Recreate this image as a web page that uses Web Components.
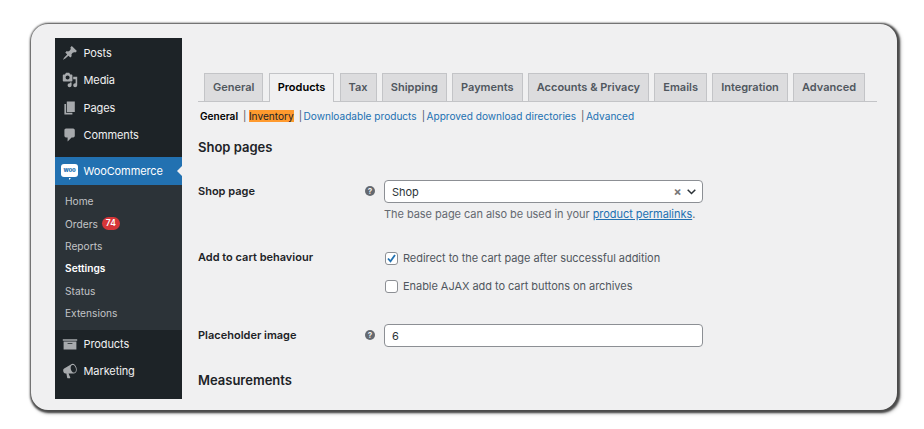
<!DOCTYPE html>
<html>
<head>
<meta charset="utf-8">
<style>
  html, body { margin: 0; background: #fff; }
  body { font-family: Inter, "Liberation Sans", sans-serif; font-size: 11px; color: #1d2327; }
</style>
</head>
<body>
<wp-screen>
  <admin-menu slot="menu">
    <menu-item icon="post">Posts</menu-item>
    <menu-item icon="media">Media</menu-item>
    <menu-item icon="page">Pages</menu-item>
    <menu-item icon="comments">Comments</menu-item>
    <menu-item icon="woo" current>WooCommerce</menu-item>
    <sub-menu>
      <sub-item>Home</sub-item>
      <sub-item>Orders <count-badge>74</count-badge></sub-item>
      <sub-item>Reports</sub-item>
      <sub-item current>Settings</sub-item>
      <sub-item>Status</sub-item>
      <sub-item>Extensions</sub-item>
    </sub-menu>
    <menu-item icon="archive">Products</menu-item>
    <menu-item icon="megaphone">Marketing</menu-item>
  </admin-menu>
  <settings-page>
    <tab-bar>
      <tab-item>General</tab-item>
      <tab-item active>Products</tab-item>
      <tab-item>Tax</tab-item>
      <tab-item>Shipping</tab-item>
      <tab-item>Payments</tab-item>
      <tab-item>Accounts &amp; Privacy</tab-item>
      <tab-item>Emails</tab-item>
      <tab-item>Integration</tab-item>
      <tab-item>Advanced</tab-item>
    </tab-bar>
    <section-links></section-links>
    <section-title>Shop pages</section-title>
    <form-row label="Shop page" help top="25">
      <shop-select></shop-select>
      <p-note>The base page can also be used in your <a-link>product permalinks</a-link>.</p-note>
    </form-row>
    <form-row label="Add to cart behaviour" tight top="30">
      <check-field checked>Redirect to the cart page after successful addition</check-field>
      <check-field>Enable AJAX add to cart buttons on archives</check-field>
    </form-row>
    <form-row label="Placeholder image" help top="17">
      <text-box>6</text-box>
    </form-row>
    <section-title style="margin-top:25px">Measurements</section-title>
  </settings-page>
</wp-screen>

<script>
const ICONS = {
    post: '<path d="M10.44 3.02l1.82-1.82 6.36 6.35-1.83 1.82c-1.05-.68-2.48-.57-3.41.36l-.75.75c-.92.93-1.04 2.35-.35 3.41l-1.83 1.82-2.41-2.41-2.8 2.79c-.42.42-3.38 2.71-3.8 2.29s1.86-3.39 2.28-3.81l2.79-2.79L4.1 9.36l1.83-1.82c1.05.69 2.48.57 3.4-.36l.75-.75c.93-.92 1.05-2.35.36-3.41z"/>',
    media: '<path d="M13 11V4c0-.55-.45-1-1-1h-1.67L9 1H5L3.67 3H2c-.55 0-1 .45-1 1v7c0 .55.45 1 1 1h10c.55 0 1-.45 1-1zM7 4.5c1.38 0 2.5 1.12 2.5 2.5S8.38 9.5 7 9.5 4.5 8.38 4.5 7 5.62 4.5 7 4.5zM14 6h5v10.5c0 1.38-1.12 2.5-2.5 2.5S14 17.88 14 16.5s1.12-2.5 2.5-2.5c.17 0 .34.02.5.05V9h-3V6zm-4 8.05V13h2v3.5c0 1.38-1.12 2.5-2.5 2.5S7 17.88 7 16.5 8.12 14 9.5 14c.17 0 .34.02.5.05z"/>',
    page: '<path d="M6 15V2h10v13H6zm-1 1h8v2H3V5h2v11z"/>',
    comments: '<path d="M5 2h9c1.1 0 2 .9 2 2v7c0 1.1-.9 2-2 2h-2l-5 5v-5H5c-1.1 0-2-.9-2-2V4c0-1.1.9-2 2-2z"/>',
    archive: '<path fill-rule="evenodd" d="M19 4v2H1V4h18zM2 7h16v10H2V7zm11 3V9H7v1h6z"/>',
    megaphone: '<path fill-rule="evenodd" d="M18.15 5.94c.46 1.62.38 3.22-.02 4.48-.42 1.28-1.26 2.18-2.3 2.48-.16.06-.26.06-.4.06-.06.02-.12.02-.18.02-.06.02-.14.02-.22.02H8.2l2.22 5.5c.02.14-.06.26-.14.34-.08.1-.24.16-.34.16H6.95c-.1 0-.26-.06-.34-.16-.08-.08-.16-.2-.14-.34l-1-5.5H4.25l-.02-.02c-.5.06-1.08-.18-1.54-.62s-.88-1.08-1.06-1.88c-.24-.8-.2-1.56-.02-2.2.18-.62.58-1.08 1.06-1.3l.02-.02 9-5.4c.1-.06.18-.1.24-.16.06-.04.14-.08.24-.12.16-.08.28-.12.5-.18 1.04-.3 2.24.1 3.22.98s1.76 2.2 2.26 3.86zm-2.58 5.98c.4-.1.74-.34 1.04-.7.58-.7.86-1.76.86-3.04-.02-.64-.12-1.34-.34-2.04-.2-.72-.52-1.34-.9-1.9-.76-1.11-1.8-1.72-2.78-1.72-.22 0-.46.04-.66.1-.56.16-.94.42-1.24.84-.32.4-.52.94-.62 1.54-.1.64-.1 1.3-.02 2.08.06.4.16.8.26 1.2.12.38.26.76.44 1.14.36.76.86 1.4 1.4 1.85.54.44 1.14.72 1.74.72.18 0 .42-.04.82-.07z"/>'
}

// small helper, every element here is just a style block and some markup
function define(name, css, html, init) {
    customElements.define(name, class extends HTMLElement {
        constructor() {
            super()
            this.attachShadow({ mode: 'open' })
        }
        connectedCallback() {
            this.shadowRoot.innerHTML = `<style>${css}</style>${typeof html === 'function' ? html(this) : html}`
            if (init) init(this)
        }
    })
}

define('wp-screen', `
    :host { display: block; width: 924px; height: 429px; padding: 24px 27px 0 31px; box-sizing: border-box; overflow: hidden; }
    .card { display: flex; align-items: flex-start; height: 386px; box-sizing: border-box; padding: 14px 20px 0 24px;
        background: #f0f0f1; border-radius: 17px; box-shadow: 1px 1px 2px 1.5px #4a4a4a, 2px 2px 4px 1px #aaa; overflow: hidden; }
`, `<div class="card"><slot name="menu"></slot><slot></slot></div>`)

define('admin-menu', `
    :host { display: flex; flex-direction: column; width: 127px; height: 361px; flex: none; padding-top: 1.3px; box-sizing: border-box; background: #1d2327; }
`, `<slot></slot>`)

define('menu-item', `
    :host { display: flex; align-items: center; height: 27.4px; flex: none; color: #f0f0f1; position: relative; letter-spacing: -.1px; }
    :host([current]) { height: 28px; margin-top: 7.7px; background: #2271b1; color: #fff; }
    .ico { width: 16px; height: 16px; margin: 0 6px 0 6.5px; fill: #a7aaad; flex: none; }
    .woo { width: 17px; height: 13px; margin: 0 5.5px 0 6px; flex: none; background: #fff; border-radius: 3px; position: relative;
        color: #2271b1; font-size: 6px; font-weight: 800; line-height: 12px; text-align: center; letter-spacing: -.2px; }
    .woo::after { content: ''; position: absolute; left: 8px; bottom: -2.5px; border: 1.5px solid transparent; border-top-color: #fff; border-left-color: #fff; }
    .arrow { position: absolute; right: 0; top: 9px; border: 5px solid transparent; border-right-color: #f0f0f1; border-left: 0; }
`, el => {
    const icon = el.getAttribute('icon')
    const mark = icon === 'woo'
        ? '<span class="woo">woo</span>'
        : `<svg class="ico" viewBox="0 0 20 20">${ICONS[icon]}</svg>`
    return `${mark}<slot></slot>${el.hasAttribute('current') ? '<span class="arrow"></span>' : ''}`
})

define('sub-menu', `
    :host { display: flex; flex-direction: column; height: 145.5px; flex: none; box-sizing: border-box; padding: 5.5px 0 0 10px; background: #2c3338; }
`, `<slot></slot>`)

define('sub-item', `
    :host { display: flex; align-items: center; gap: 4px; height: 22.4px; flex: none; font-size: 10.2px; color: #c3c4c7; }
    :host([current]) { color: #fff; font-weight: 600; }
`, `<slot></slot>`)

define('count-badge', `
    :host { display: inline-block; background: #d63638; color: #fff; border-radius: 9px; font-size: 8.5px; font-weight: 600; line-height: 13px; padding: 0 4px; }
`, `<slot></slot>`)

define('settings-page', `
    :host { display: block; flex: 1; min-width: 0; padding: 35px 0 0 16px; }
`, `<slot></slot>`)

define('tab-bar', `
    :host { display: flex; gap: 5.2px; padding-left: 6px; border-bottom: 1px solid #c3c4c7; height: 28px; align-items: flex-end; }
`, `<slot></slot>`)

define('tab-item', `
    :host { display: block; box-sizing: border-box; height: 28px; padding: 0 8px; line-height: 26px; font-weight: 600; color: #50575e;
        background: #dcdcde; border: 1px solid #c3c4c7; border-bottom: 0; white-space: nowrap; }
    :host([active]) { background: #f0f0f1; color: #000; height: 29px; margin-bottom: -1px; }
`, `<slot></slot>`)

define('section-links', `
    :host { display: flex; align-items: center; height: 14px; margin: 7px 0 0 2px; font-size: 10.1px; color: #2271b1; white-space: nowrap; }
    b { color: #000; font-weight: 600; }
    i { font-style: normal; color: #50575e; margin: 0 1.5px 0 5px; }
    b + i { margin-right: 2.5px; }
    mark { background: #ff9a2e; color: #1d2327; padding: 0; }
`, `<b>General</b><i>|</i><mark>Inventory</mark><i>|</i><span>Downloadable products</span><i>|</i><span>Approved download directories</span><i>|</i><span>Advanced</span>`)

define('section-title', `
    :host { display: block; margin-top: 16px; font-size: 13px; line-height: 16px; font-weight: 600; color: #1d2327; }
`, `<slot></slot>`)

define('form-row', `
    :host { display: flex; }
    .label { width: 186px; flex: none; display: flex; justify-content: space-between; align-items: flex-start; padding-right: 8px; box-sizing: border-box; font-weight: 600; color: #1d2327; line-height: 23px; }
    :host([tight]) .label { line-height: 12px; }
    .help { width: 10px; height: 10px; margin: 6px 1px 0 0; border-radius: 50%; background: #646970; color: #f0f0f1; font-size: 8px; line-height: 10px; font-weight: 700; text-align: center; }
    .field { width: 318.5px; display: flex; flex-direction: column; letter-spacing: -.05px; }
`, el => `
    <div class="label">${el.getAttribute('label')}${el.hasAttribute('help') ? '<span class="help">?</span>' : ''}</div>
    <div class="field"><slot></slot></div>
`, el => { el.style.marginTop = `${el.getAttribute('top')}px` })

define('shop-select', `
    :host { display: flex; align-items: center; height: 23px; box-sizing: border-box; padding: 0 0 0 7px; background: #fff; border: 1px solid #8c8f94; border-radius: 4px; color: #2c3338; }
    span { flex: 1; }
    .x { color: #777; font-weight: 700; font-size: 12px; flex: none; margin-right: 5px; }
    svg { width: 9px; height: 6px; margin-right: 6px; fill: none; stroke: #2c3338; stroke-width: 1.5; }
`, `<span>Shop</span><span class="x">×</span><svg viewBox="0 0 9 6"><path d="M.7.7l3.8 3.8L8.3.7"/></svg>`)

define('p-note', `
    :host { display: block; margin-top: 4px; line-height: 14px; color: #646970; }
`, `<slot></slot>`)

define('a-link', `
    :host { color: #2271b1; text-decoration: underline; }
`, `<slot></slot>`)

define('check-field', `
    :host { display: flex; align-items: center; gap: 5.5px; height: 14px; color: #50575e; margin-bottom: 14px; }
    .box { width: 13px; height: 13px; margin-left: .5px; box-sizing: border-box; flex: none; background: #fff; border: 1px solid #8c8f94; border-radius: 3px; }
    svg { display: block; width: 11px; height: 11px; fill: none; stroke: #2271b1; stroke-width: 1.8; }
`, el => `<span class="box">${el.hasAttribute('checked') ? '<svg viewBox="0 0 11 11"><path d="M2 5.5l2.5 2.8L9 2"/></svg>' : ''}</span><slot></slot>`)

define('text-box', `
    :host { display: flex; align-items: center; height: 23px; box-sizing: border-box; padding: 0 7px; background: #fff; border: 1px solid #8c8f94; border-radius: 4px; color: #2c3338; }
`, `<slot></slot>`)
</script>
</body>
</html>
